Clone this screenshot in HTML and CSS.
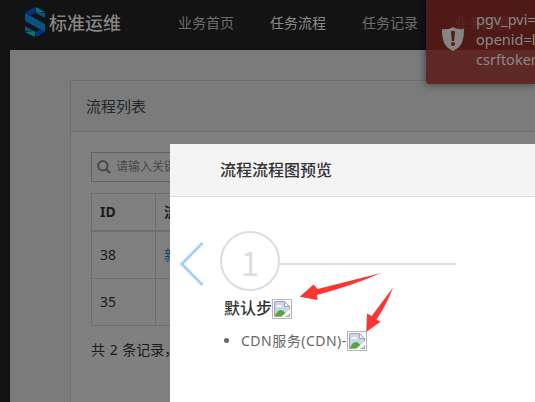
FILE: index.html
```html
<!DOCTYPE html>
<html lang="zh-CN">
<head>
<meta charset="utf-8">
<title>标准运维</title>
<link rel="stylesheet" href="styles.css">
</head>
<body>
<header class="topbar">
  <div class="brand">
    <svg class="logo" width="20" height="30" viewBox="0 0 20 30">
      <path d="M0 6L20 17V25L0 14Z" fill="#075385"/>
      <path d="M0 5.500L10 0V5Z" fill="#07317f"/>
      <path d="M0 6L10 .5V6L5 8.500Z" fill="#07317f"/>
      <path d="M11 0L20 5L11 6Z" fill="#087574"/>
      <path d="M11 6H20V11Z" fill="#075385"/>
      <path d="M0 19L9 24H0Z" fill="#075385"/>
      <path d="M0 25L10 24V30Z" fill="#087574"/>
      <path d="M11 24.500L15 22.500L20 25L11 30Z" fill="#07317f"/>
    </svg>
    <span class="brand-name">标准运维</span>
  </div>
  <nav class="nav"><a>业务首页</a><a class="active">任务流程</a><a>任务记录</a><a>业务配置</a></nav>
</header>
<main class="page">
  <section class="panel">
    <h2 class="panel-title">流程列表</h2>
    <div class="panel-body">
      <div class="search">
        <svg width="14" height="14" viewBox="0 0 14 14"><circle cx="5.8" cy="5.8" r="4.7" fill="none" stroke="#474747" stroke-width="2"/><path d="M9.3 9.3L13 13" stroke="#474747" stroke-width="2.4"/></svg>
        <span>请输入关键字</span>
      </div>
      <table class="list">
        <thead><tr><th class="id">ID</th><th>流程名称</th></tr></thead>
        <tbody><tr><td>38</td><td class="link">新建流程</td></tr><tr><td>35</td><td></td></tr></tbody>
      </table>
      <p class="total">共 2 条记录，</p>
    </div>
  </section>
</main>
<aside class="toast">
  <svg width="22" height="24" viewBox="0 0 22 24"><path d="M11 0C8 2 4 2.5 0 2C0 13 2 20 11 24C20 20 22 13 22 2C18 2.500 14 2 11 0Z" fill="#858585"/><path d="M9 4.500Q11 3 13 4.500L12.200 14H9.800Z" fill="#571c1a"/><circle cx="11" cy="17" r="2" fill="#571c1a"/></svg>
  <div class="toast-text">pgv_pvi=<br>openid=l<br>csrftoken</div>
</aside>
<section class="dialog">
  <h3 class="dialog-title">流程流程图预览</h3>
  <div class="dialog-body">
    <svg class="prev" width="24" height="44" viewBox="0 0 24 44"><path d="M22.500 1L1.800 22L22.500 43" fill="none" stroke="#a3cfff" stroke-width="2.800"/></svg>
    <div class="step">
      <div class="step-head"><span class="step-number">1</span><span class="step-line"></span></div>
      <div class="step-name"><span>默认步</span><svg class="broken" width="20" height="20" viewBox="0 0 20 20"><use href="#missing"/></svg></div>
      <div class="task"><i class="dot"></i><span>CDN服务(CDN)-</span><svg class="broken" width="20" height="20" viewBox="0 0 20 20"><use href="#missing"/></svg></div>
    </div>
  </div>
</section>
<svg class="pointers" width="100" height="64" viewBox="0 0 100 64">
  <path d="M82 1L18.500 17L14.500 12.500L.7 24.700L18.500 28L18 23Q55 13 82 1Z" fill="#fa3635"/>
  <path d="M94 15.500L72.700 44L68 41.500L67.300 60L81.500 49.700L77.500 47.500Q88 32 94 15.500Z" fill="#fa3635"/>
</svg>
<svg class="defs" width="0" height="0"><defs><g id="missing">
  <path d="M.5 .5H19.500V19.500H.5Z" fill="#fff" stroke="#b5b5b5"/>
  <path d="M2.500 2.500H12.500L17.500 7.500V17.500H2.500Z" fill="#c5d6f6" stroke="#a3a3a3"/>
  <path d="M4 8Q5 5.500 7 6Q9 5 10 8Z" fill="#fff"/>
  <path d="M3 17Q5 11 9 11Q13 12 15 17Z" fill="#57a936"/>
  <path d="M12.500 2.500V7.500H17.500Z" fill="#f4f4f4" stroke="#a3a3a3"/>
  <path d="M9 18L18 10V14L13 18Z" fill="#fff"/>
</g></defs></svg>
</body>
</html>
```
FILE: styles.css
```css
* { box-sizing: border-box; }
body { margin: 0; width: 535px; height: 402px; overflow: hidden; position: relative; background: #131313; font: 14px/20px "Noto Sans", "Noto Sans CJK SC", sans-serif; color: #1b1b1b; }
.topbar { display: flex; height: 50px; padding-left: 25px; background: #131313; }
.brand { display: flex; width: 153px; padding-top: 7px; }
.brand-name { margin: 5px 0 0 4px; font-size: 18px; line-height: 20px; font-weight: 500; color: #858585; white-space: nowrap; font-family: "Noto Sans CJK SC", sans-serif; }
.nav { display: flex; gap: 36px; padding-top: 13px; color: #6e6e6e; white-space: nowrap; }
.nav .active { color: #8a8a8a; }
.page { height: 352px; margin-left: 10px; padding: 30px 0 0 60px; background: #7b7b7b; }
.panel { height: 340px; border: 1px solid #6e6e6e; border-right: 0; background: #808080; }
.panel-title { height: 51px; margin: 0; padding: 15px; border-bottom: 1px solid #6e6e6e; background: #7b7b7b; font-size: 15px; line-height: 20px; font-weight: 400; color: #24272b; }
.panel-body { padding: 20px 0 0 20px; }
.search { display: flex; align-items: center; gap: 5px; width: 200px; height: 30px; padding-left: 5px; border: 1px solid #616161; font-size: 12px; color: #484848; }
.list { width: 400px; margin-top: 11px; border-collapse: separate; border-spacing: 0; border: solid #6e6e6e; border-width: 1px 0 0 1px; table-layout: fixed; }
.list th, .list td { height: 47px; padding: 0 8px; border: solid #6e6e6e; border-width: 0 1px 1px 0; text-align: left; }
.list th { height: 38px; border-bottom-width: 2px; }
.list .id { width: 64px; }
.list .link { color: #1d4366; }
.total { margin: 14px 0 0; word-spacing: 1px; }
.toast { position: absolute; left: 426px; top: 0; width: 109px; height: 84px; display: flex; padding: 27px 0 0 16px; gap: 12px; border-radius: 0 0 0 3px; background: linear-gradient(rgba(88, 26, 23, .86) 50px, rgba(91, 29, 28, .88) 50px); box-shadow: 0 0 8px rgba(0, 0, 0, .55); color: #898989; overflow: hidden; }
.toast svg { flex: none; }
.toast-text { margin-top: -18px; line-height: 20px; font-size: 14.5px; }
.dialog { position: absolute; left: 170px; top: 144px; width: 365px; height: 258px; background: #fff; }
.dialog-title { height: 53px; margin: 0; padding: 16px 50px; border-bottom: 1px solid #ddd; background: #f4f4f4; font-size: 16px; line-height: 20px; font-weight: 500; color: #333; }
.dialog-body { display: flex; gap: 16px; padding: 34px 0 0 10px; }
.prev { margin-top: 11px; }
.step-head { display: flex; align-items: center; height: 62px; }
.step-number { width: 60px; height: 60px; border: 2px solid #ddd; border-radius: 50%; text-align: center; font: 33px/58px "Noto Sans CJK SC", sans-serif; color: #ddd; margin-top: -2px; }
.step-line { width: 176px; height: 2px; margin-top: 4px; background: #ddd; }
.step-name { display: flex; align-items: center; height: 28px; padding-left: 4px; font-size: 16px; font-weight: 500; color: #333; margin-top: 1px; }
.broken { margin-top: 2px; }
.task { display: flex; align-items: center; height: 28px; margin-top: 4px; padding-left: 4px; color: #666; }
.task span { width: 106px; padding-top: 1px; white-space: nowrap; letter-spacing: .5px; }
.dot { width: 5px; height: 5px; margin-right: 12px; border-radius: 50%; background: #666; }
.pointers { position: absolute; left: 299px; top: 272px; }
.defs { position: absolute; }
```
